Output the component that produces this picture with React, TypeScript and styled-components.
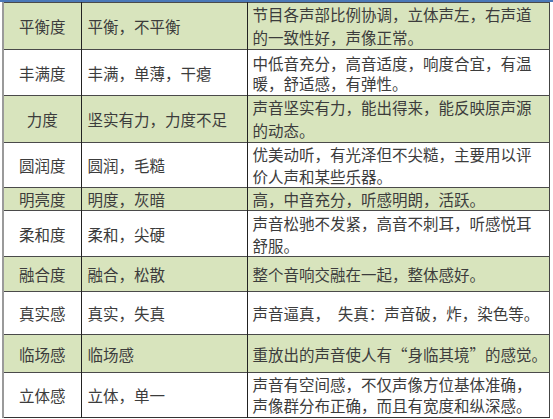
import React from "react";
import styled, { createGlobalStyle } from "styled-components";

const GlobalStyle = createGlobalStyle`
  html, body {
    margin: 0;
    padding: 0;
    background: #ffffff;
  }
  body {
    font-family: "Noto Sans CJK SC", "Noto Sans", sans-serif;
  }
`;

interface RowData {
  name: string;
  terms: string;
  desc: string[];
  height: number;
  lineHeight?: number;
}

const rows: RowData[] = [
  {
    name: "平衡度",
    terms: "平衡，不平衡",
    desc: ["节目各声部比例协调，立体声左，右声道", "的一致性好，声像正常。"],
    height: 45,
    lineHeight: 23,
  },
  {
    name: "丰满度",
    terms: "丰满，单薄，干瘪",
    desc: ["中低音充分，高音适度，响度合宜，有温", "暖，舒适感，有弹性。"],
    height: 46,
    lineHeight: 20,
  },
  {
    name: "力度",
    terms: "坚实有力，力度不足",
    desc: ["声音坚实有力，能出得来，能反映原声源", "的动态。"],
    height: 45,
    lineHeight: 23,
  },
  {
    name: "圆润度",
    terms: "圆润，毛糙",
    desc: ["优美动听，有光泽但不尖糙，主要用以评", "价人声和某些乐器。"],
    height: 45,
  },
  {
    name: "明亮度",
    terms: "明度，灰暗",
    desc: ["高，中音充分，听感明朗，活跃。"],
    height: 23,
  },
  {
    name: "柔和度",
    terms: "柔和，尖硬",
    desc: ["声音松驰不发紧，高音不刺耳，听感悦耳", "舒服。"],
    height: 46,
  },
  {
    name: "融合度",
    terms: "融合，松散",
    desc: ["整个音响交融在一起，整体感好。"],
    height: 35,
  },
  {
    name: "真实感",
    terms: "真实，失真",
    desc: ["声音逼真，\u2002失真：声音破，炸，染色等。"],
    height: 43,
  },
  {
    name: "临场感",
    terms: "临场感",
    desc: ["重放出的声音使人有“身临其境”的感觉。"],
    height: 38,
  },
  {
    name: "立体感",
    terms: "立体，单一",
    desc: ["声音有空间感，不仅声像方位基体准确，", "声像群分布正确，而且有宽度和纵深感。"],
    height: 45,
    lineHeight: 21,
  },
];

const Page = styled.div`
  width: 553px;
  height: 419px;
  overflow: hidden;
  background: #ffffff;
`;

const TopRule = styled.div`
  height: 2px;
  background: #4a78b8;
`;

const Table = styled.table`
  margin-left: 2px;
  width: 548px;
  table-layout: fixed;
  border-collapse: collapse;
  border-left: 2px solid #9a9a9a;
  border-right: 1px solid #444444;
  border-bottom: 1px solid #333333;
  color: #3c3c3c;
  font-size: 15.5px;
`;

const Row = styled.tr<{ $shaded: boolean; $height: number }>`
  height: ${(p) => p.$height}px;
  background: ${(p) => (p.$shaded ? "#d8e4bd" : "#ffffff")};
  border-top: 1px solid #4a4a4a;
`;

const NameCell = styled.td`
  padding: 0;
  text-align: center;
  vertical-align: middle;
  border-right: 1px solid #222222;
  line-height: 20px;
`;

const TermsCell = styled.td`
  padding: 0 0 0 6px;
  text-align: left;
  vertical-align: middle;
  border-right: 1px solid #222222;
  line-height: 20px;
`;

const DescCell = styled.td<{ $lineHeight: number }>`
  padding: 0 0 0 5px;
  text-align: left;
  vertical-align: middle;
  line-height: ${(p) => p.$lineHeight}px;
  white-space: nowrap;
`;

const DescLine = styled.div``;

export default function App() {
  return (
    <Page>
      <GlobalStyle />
      <TopRule />
      <Table>
        <colgroup>
          <col style={{ width: 78 }} />
          <col style={{ width: 166 }} />
          <col />
        </colgroup>
        <tbody>
          {rows.map((row, i) => (
            <Row key={row.name} $shaded={i % 2 === 0} $height={row.height}>
              <NameCell>{row.name}</NameCell>
              <TermsCell>{row.terms}</TermsCell>
              <DescCell $lineHeight={row.lineHeight ?? 22}>
                {row.desc.map((line) => (
                  <DescLine key={line}>{line}</DescLine>
                ))}
              </DescCell>
            </Row>
          ))}
        </tbody>
      </Table>
    </Page>
  );
}
